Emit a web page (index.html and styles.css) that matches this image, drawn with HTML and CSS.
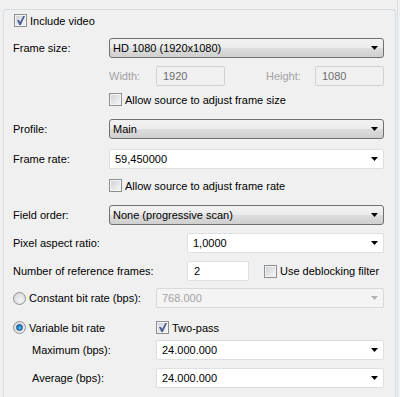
FILE: index.html
```html
<!DOCTYPE html>
<html lang="en">
<head>
    <meta charset="UTF-8">
    <title>Video Settings</title>
    <link rel="stylesheet" href="styles.css">
</head>
<body>
    <div class="window">
        <div class="group">
            <label class="check include">
                <span class="box checked"></span>Include video
            </label>

            <div class="row frame-size">
                <span class="label">Frame size:</span>
                <div class="select">HD 1080 (1920x1080)</div>
            </div>

            <div class="row dims">
                <span class="dim-label disabled">Width:</span>
                <div class="input disabled w-small">1920</div>
                <span class="dim-label height disabled">Height:</span>
                <div class="input disabled w-small">1080</div>
            </div>

            <label class="check indent allow-size">
                <span class="box"></span>Allow source to adjust frame size
            </label>

            <div class="row profile">
                <span class="label">Profile:</span>
                <div class="select">Main</div>
            </div>

            <div class="row frame-rate">
                <span class="label">Frame rate:</span>
                <div class="combo">59,450000</div>
            </div>

            <label class="check indent allow-rate">
                <span class="box"></span>Allow source to adjust frame rate
            </label>

            <div class="row field-order">
                <span class="label">Field order:</span>
                <div class="select">None (progressive scan)</div>
            </div>

            <div class="row aspect">
                <span class="label wide">Pixel aspect ratio:</span>
                <div class="combo">1,0000</div>
            </div>

            <div class="row ref-frames">
                <span class="label wide">Number of reference frames:</span>
                <div class="input w-ref">2</div>
                <label class="check deblock">
                    <span class="box"></span>Use deblocking filter
                </label>
            </div>

            <div class="row constant">
                <label class="radio-label">
                    <span class="radio"></span>Constant bit rate (bps):
                </label>
                <div class="combo disabled">768.000</div>
            </div>

            <div class="row variable">
                <label class="radio-label">
                    <span class="radio on"></span>Variable bit rate
                </label>
                <label class="check">
                    <span class="box checked"></span>Two-pass
                </label>
            </div>

            <div class="row maximum">
                <span class="label sub">Maximum (bps):</span>
                <div class="combo">24.000.000</div>
            </div>

            <div class="row average">
                <span class="label sub">Average (bps):</span>
                <div class="combo">24.000.000</div>
            </div>
        </div>
    </div>
</body>
</html>
```

FILE: styles.css
```css
:root {
    --bg: #f0f0f0;
    --text: #000000;
    --muted: #a3a3a3;
    --group-border: #d5dfe5;
    --field-border: #dcdfe4;
    --button-border: #707070;
}

body {
    margin: 0;
    background: var(--bg);
    color: var(--text);
    font-family: "Liberation Sans", Arial, sans-serif;
    font-size: 11px;
    height: 397px;
    overflow: hidden;
}

.window {
    width: 398px;
    height: 397px;
    border-right: 1px solid var(--group-border);
    padding-top: 9px;
    box-sizing: border-box;
}

.group {
    margin-left: 3px;
    width: 393px;
    height: 400px;
    box-sizing: border-box;
    border: 1px solid var(--group-border);
    border-bottom: none;
    border-radius: 3px 3px 0 0;
    padding: 0 11px 0 9px;
}

/* rows */
.row {
    display: flex;
    align-items: center;
    height: 20px;
}

.label {
    width: 96px;
    flex: none;
    white-space: nowrap;
}

.label.wide {
    width: 174px;
}

.label.sub {
    width: 124px;
    padding-left: 19px;
}

.frame-size { margin-top: 11px; }
.dims { margin-top: 8px; }
.allow-size { margin-top: 7px; }
.profile { margin-top: 13px; }
.frame-rate { margin-top: 10px; }
.allow-rate { margin-top: 10px; }
.field-order { margin-top: 13px; }
.aspect { margin-top: 8px; }
.ref-frames { margin-top: 8px; }
.constant { margin-top: 7px; }
.variable { margin-top: 13px; height: 13px; }
.maximum { margin-top: 6px; }
.average { margin-top: 8px; }

.disabled {
    color: var(--muted);
}

/* width / height */
.dims {
    padding-left: 96px;
}

.dim-label {
    width: 47px;
    flex: none;
}

.dim-label.height {
    margin-left: 41px;
    width: 49px;
}

/* controls */
.select,
.combo,
.input {
    position: relative;
    height: 20px;
    line-height: 18px;
    box-sizing: border-box;
    white-space: nowrap;
}

.select {
    flex: 1;
    border: 1px solid var(--button-border);
    border-radius: 3px;
    padding-left: 3px;
    background: linear-gradient(#f2f2f2 0%, #ebebeb 50%, #dddddd 51%, #cfcfcf 100%);
}

.combo {
    flex: 1;
    border: 1px solid var(--field-border);
    border-radius: 2px;
    padding-left: 5px;
    background: #ffffff;
}

.combo.disabled {
    background: #f4f4f4;
    border-color: #d9d9d9;
}

.select::after,
.combo::after {
    content: "";
    position: absolute;
    right: 5px;
    top: 7px;
    width: 7px;
    height: 4px;
    background: #000000;
    clip-path: polygon(0 0, 100% 0, 50% 100%);
}

.combo.disabled::after {
    background: #b4b4b4;
}

.input {
    flex: none;
    border: 1px solid var(--field-border);
    border-radius: 2px;
    padding-left: 6px;
    background: #ffffff;
}

.input.disabled {
    background: var(--bg);
    border-color: #d2d2d2;
    color: #6d6d6d;
}

.w-small { width: 69px; }
.w-ref { width: 62px; }

/* checkboxes */
.check {
    display: flex;
    align-items: center;
    height: 13px;
    white-space: nowrap;
}

.include {
    margin-top: 4px;
    padding-left: 1px;
}

.indent {
    padding-left: 96px;
}

.deblock {
    margin-left: 15px;
}

.box {
    width: 13px;
    height: 13px;
    box-sizing: border-box;
    border: 1px solid #8e8f8f;
    margin-right: 3px;
    flex: none;
    background: linear-gradient(135deg, #cdd1d6, #f7f7f7);
    box-shadow: inset 0 0 0 1px #f4f4f4;
    position: relative;
}

.box.checked::after {
    content: "";
    position: absolute;
    left: 2px;
    top: 1px;
    width: 8px;
    height: 9px;
    background: #4a5e92;
    clip-path: polygon(0 45%, 25% 45%, 40% 68%, 78% 0, 100% 0, 48% 100%, 30% 100%);
}

/* radios */
.radio-label {
    display: flex;
    align-items: center;
    width: 143px;
    flex: none;
    white-space: nowrap;
}

.radio {
    width: 13px;
    height: 13px;
    box-sizing: border-box;
    border-radius: 50%;
    border: 1px solid #929292;
    background: radial-gradient(circle at 60% 65%, #f4f4f4, #cfd2d6);
    margin-right: 3px;
    position: relative;
    flex: none;
}

.radio.on::after {
    content: "";
    position: absolute;
    left: 2px;
    top: 2px;
    width: 7px;
    height: 7px;
    box-sizing: border-box;
    border-radius: 50%;
    border: 1px solid #1d4d86;
    background: radial-gradient(circle at 55% 60%, #4fc8f7, #0f61b4 80%);
}
```
